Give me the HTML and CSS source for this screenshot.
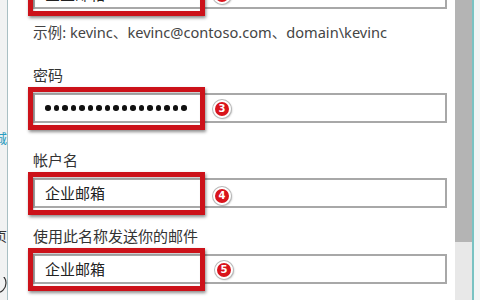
FILE: index.html
```html
<!DOCTYPE html>
<html lang="zh-CN">
<head>
<meta charset="utf-8">
<title>添加帐户</title>
<link rel="stylesheet" href="styles.css">
</head>
<body>
<div class="screen">
  <aside class="nav">
    <div class="nav-item nav-link">商城</div>
    <div class="nav-item nav-page">主页</div>
    <svg class="nav-icon" width="7" height="22" viewBox="0 0 7 22"><circle cx="-4" cy="6" r="10" fill="none" stroke="#333" stroke-width="1.2"/></svg>
  </aside>
  <main class="pane">
    <div class="form">
      <div class="field field-top">
        <div class="input-wrap">
          <div class="input">企业邮箱</div>
          <div class="mark"></div>
          <span class="badge">2</span>
        </div>
        <p class="hint">示例: kevinc、kevinc@contoso.com、domain\kevinc</p>
      </div>

      <div class="field field-password">
        <label class="label">密码</label>
        <div class="input-wrap">
          <div class="input input-dots">
            <span class="dot"></span><span class="dot"></span><span class="dot"></span><span class="dot"></span><span class="dot"></span><span class="dot"></span><span class="dot"></span><span class="dot"></span><span class="dot"></span><span class="dot"></span><span class="dot"></span><span class="dot"></span><span class="dot"></span><span class="dot"></span><span class="dot"></span><span class="dot"></span><span class="dot"></span>
          </div>
          <div class="mark"></div>
          <span class="badge">3</span>
        </div>
      </div>

      <div class="field field-account">
        <label class="label">帐户名</label>
        <div class="input-wrap">
          <div class="input">企业邮箱</div>
          <div class="mark"></div>
          <span class="badge badge-low">4</span>
        </div>
      </div>

      <div class="field field-sender">
        <label class="label">使用此名称发送你的邮件</label>
        <div class="input-wrap">
          <div class="input">企业邮箱</div>
          <div class="mark"></div>
          <span class="badge badge-right">5</span>
        </div>
      </div>
    </div>
  </main>
  <div class="scrollbar"><div class="thumb"></div></div>
  <div class="edge"></div>
</div>
</body>
</html>
```
FILE: styles.css
```css
* { box-sizing: border-box; }
html, body {
  margin: 0;
  padding: 0;
  background: #fff;
}
body {
  width: 480px;
  height: 300px;
  overflow: hidden;
  font-family: "Noto Sans", "Noto Sans CJK SC", sans-serif;
  color: #333;
}
.screen {
  display: flex;
  width: 480px;
  height: 300px;
}

/* left navigation strip, mostly clipped */
.nav {
  flex: 0 0 8px;
  width: 8px;
  height: 300px;
  background: #f1f2f2;
  border-right: 1px solid #a9bfc3;
  overflow: hidden;
  display: flex;
  flex-direction: column;
  align-items: flex-end;
}
.nav-item {
  font-family: "Noto Sans CJK SC", sans-serif;
  font-size: 13px;
  line-height: 16px;
  white-space: nowrap;
  display: flex;
  justify-content: flex-end;
  width: 7px;
}
.nav-link { margin-top: 130px; color: #2a9cc0; }
.nav-page { margin-top: 82px; color: #333; }
.nav-icon { display: block; margin-top: 33px; flex: 0 0 auto; }

/* main form pane */
.pane {
  flex: 0 0 447px;
  width: 447px;
  height: 300px;
  overflow: hidden;
  padding: 0 8px 0 25px;
}
.form {
  margin-top: -21px;
}
.field { display: flex; flex-direction: column; }
.field-password { margin-top: 23px; }
.field-account { margin-top: 27px; }
.field-sender { margin-top: 18px; }

.label {
  font-family: "Noto Sans CJK SC", sans-serif;
  font-size: 15px;
  line-height: 20px;
  color: #333;
  margin-bottom: 8px;
}
.hint {
  margin: 13px 0 0;
  font-size: 14.6px;
  line-height: 20px;
  color: #444;
  white-space: nowrap;
}

.input-wrap {
  position: relative;
  width: 414px;
  height: 30px;
}
.input {
  height: 30px;
  border: 2px solid #a8a8a8;
  background: #fff;
  padding-left: 10px;
  font-family: "Noto Sans CJK SC", sans-serif;
  font-size: 15px;
  line-height: 26px;
  color: #222;
  white-space: nowrap;
}
.input-dots {
  display: flex;
  align-items: center;
  gap: 3px;
  padding-left: 10px;
}
.dot {
  width: 5.5px;
  height: 5.5px;
  border-radius: 50%;
  background: #111;
  flex: 0 0 5.5px;
}

/* red annotation frame */
.mark {
  position: absolute;
  left: -5px;
  top: -6px;
  width: 177px;
  height: 43px;
  border: 5px solid #cc121a;
  box-shadow: 1px 2px 3px rgba(0,0,0,0.45), inset 1px 1px 2px rgba(0,0,0,0.25);
}

/* numbered badge */
.badge {
  position: absolute;
  left: 180px;
  top: 7px;
  width: 18px;
  height: 18px;
  border-radius: 50%;
  background: #d9141c;
  border: 2px solid #fff;
  box-shadow: 0 0 0 1px #b8b8b8, 1px 1px 2px rgba(0,0,0,0.3);
  color: #fff;
  font-family: "DejaVu Sans", sans-serif;
  font-weight: bold;
  font-size: 10px;
  line-height: 14px;
  text-align: center;
}
.badge-low { top: 9px; }
.badge-right { left: 182px; }

/* scrollbar */
.scrollbar {
  flex: 0 0 17px;
  height: 300px;
  background: #e8e8e8;
}
.thumb {
  height: 242px;
  background: #b4b4b4;
}
.edge {
  flex: 1 1 auto;
  height: 300px;
  background: #f2f5f5;
  border-left: 2px solid #79c3c3;
}
```
